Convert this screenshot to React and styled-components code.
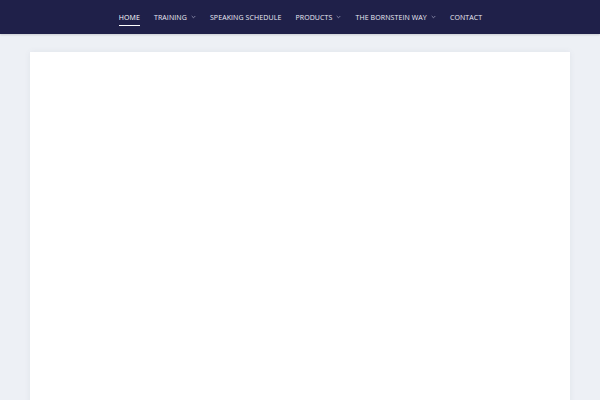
import React from 'react'
import styled, { createGlobalStyle } from 'styled-components'

const Global = createGlobalStyle`
  html, body {
    margin: 0;
    padding: 0;
    background: #edf0f5;
    font-family: "Open Sans", "Liberation Sans", sans-serif;
  }
`

const items = [
  { label: 'Home', active: true },
  { label: 'Training', drop: true },
  { label: 'Speaking Schedule' },
  { label: 'Products', drop: true },
  { label: 'The Bornstein Way', drop: true },
  { label: 'Contact' },
]

function Chevron() {
  return (
    <svg width="5" height="4" viewBox="0 0 5 4" fill="none">
      <path d="M0.7 1 L2.5 2.8 L4.3 1" stroke="currentColor" strokeWidth="0.8" />
    </svg>
  )
}

export default function App() {
  return (
    <Page>
      <Global />
      <Header>
        <Nav>
          {items.map((it) => (
            <NavItem key={it.label} active={it.active}>
              {it.label}
              {it.drop && <Chevron />}
            </NavItem>
          ))}
        </Nav>
      </Header>
      <Main>
        <Card />
      </Main>
    </Page>
  )
}

const Page = styled.div`
  width: 600px;
  height: 400px;
  overflow: hidden;
  background: #edf0f5;
`

const Header = styled.header`
  height: 34px;
  background: #1f2049;
  display: flex;
  justify-content: center;
  align-items: center;
  box-shadow: 0 1px 2px rgba(0, 0, 0, 0.15);
`

const Nav = styled.nav`
  display: flex;
  gap: 14px;
  align-items: center;
  height: 100%;
  padding-left: 1px;
`

const NavItem = styled.div`
  position: relative;
  display: flex;
  align-items: center;
  gap: 4px;
  height: 100%;
  font-size: 7px;
  font-weight: 500;
  letter-spacing: 0.1px;
  text-transform: uppercase;
  color: ${(p) => (p.active ? '#ffffff' : '#ececf5')};

  svg {
    color: #9a9bb8;
  }

  &::after {
    content: '';
    display: ${(p) => (p.active ? 'block' : 'none')};
    position: absolute;
    left: 0;
    right: 0;
    bottom: 8px;
    height: 1.5px;
    background: #ffffff;
  }
`

const Main = styled.main`
  padding: 18px 30px 0;
`

const Card = styled.div`
  height: 360px;
  background: #ffffff;
  box-shadow: 0 0 6px rgba(80, 90, 120, 0.08);
`
